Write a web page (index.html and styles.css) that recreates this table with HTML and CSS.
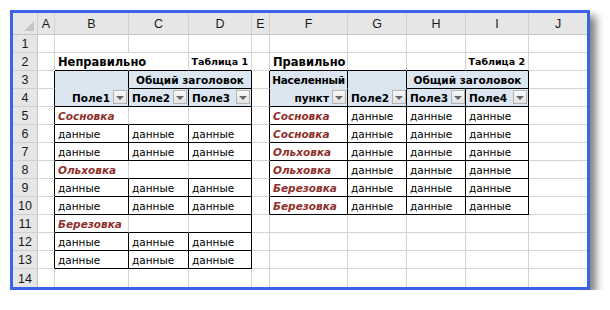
FILE: index.html
```html
<!DOCTYPE html>
<html lang="ru">
<head>
<meta charset="utf-8">
<title>Таблицы</title>
<link rel="stylesheet" href="styles.css">
</head>
<body>
<div class="sheet">
  <!-- column headers -->
  <div class="ch corner"><span class="tri"></span></div>
  <div class="ch">A</div><div class="ch">B</div><div class="ch">C</div><div class="ch">D</div><div class="ch">E</div>
  <div class="ch">F</div><div class="ch">G</div><div class="ch">H</div><div class="ch">I</div><div class="ch last">J</div>

  <!-- row 1 -->
  <div class="rh">1</div>
  <div class="c"></div><div class="c"></div><div class="c"></div><div class="c"></div><div class="c"></div>
  <div class="c"></div><div class="c"></div><div class="c"></div><div class="c"></div><div class="c last"></div>

  <!-- row 2 -->
  <div class="rh">2</div>
  <div class="c"></div>
  <div class="c title nR bB">Неправильно</div>
  <div class="c bB"></div>
  <div class="c cap r bB">Таблица 1</div>
  <div class="c"></div>
  <div class="c title bB">Правильно</div>
  <div class="c bB"></div>
  <div class="c bB"></div>
  <div class="c cap r bB">Таблица 2</div>
  <div class="c last"></div>

  <!-- row 3 -->
  <div class="rh">3</div>
  <div class="c bR"></div>
  <div class="c hd bR nb"></div>
  <div class="c hd b ctr bR bB span2">Общий заголовок</div>
  <div class="c bR"></div>
  <div class="c hd b ctr bR nb tight">Населенный</div>
  <div class="c hd bR nb"></div>
  <div class="c hd b ctr bR bB span2">Общий заголовок</div>
  <div class="c last"></div>

  <!-- row 4 -->
  <div class="rh">4</div>
  <div class="c bR"></div>
  <div class="c hd b r bR bB"><span>Поле1</span><span class="btn"></span></div>
  <div class="c hd b bR bB"><span class="grow">Поле2</span><span class="btn"></span></div>
  <div class="c hd b bR bB"><span class="grow">Поле3</span><span class="btn"></span></div>
  <div class="c bR"></div>
  <div class="c hd b r bR bB"><span>пункт</span><span class="btn"></span></div>
  <div class="c hd b bR bB"><span class="grow">Поле2</span><span class="btn"></span></div>
  <div class="c hd b bR bB"><span class="grow">Поле3</span><span class="btn"></span></div>
  <div class="c hd b bR bB"><span class="grow">Поле4</span><span class="btn"></span></div>
  <div class="c last"></div>

  <!-- row 5 -->
  <div class="rh">5</div>
  <div class="c bR"></div>
  <div class="c grp bB">Сосновка</div>
  <div class="c bB"></div>
  <div class="c bR bB"></div>
  <div class="c bR"></div>
  <div class="c grp bR bB">Сосновка</div>
  <div class="c bR bB">данные</div>
  <div class="c bR bB">данные</div>
  <div class="c bR bB">данные</div>
  <div class="c last"></div>

  <!-- row 6 -->
  <div class="rh">6</div>
  <div class="c bR"></div>
  <div class="c bR bB">данные</div>
  <div class="c bR bB">данные</div>
  <div class="c bR bB">данные</div>
  <div class="c bR"></div>
  <div class="c grp bR bB">Сосновка</div>
  <div class="c bR bB">данные</div>
  <div class="c bR bB">данные</div>
  <div class="c bR bB">данные</div>
  <div class="c last"></div>

  <!-- row 7 -->
  <div class="rh">7</div>
  <div class="c bR"></div>
  <div class="c bR bB">данные</div>
  <div class="c bR bB">данные</div>
  <div class="c bR bB">данные</div>
  <div class="c bR"></div>
  <div class="c grp bR bB">Ольховка</div>
  <div class="c bR bB">данные</div>
  <div class="c bR bB">данные</div>
  <div class="c bR bB">данные</div>
  <div class="c last"></div>

  <!-- row 8 -->
  <div class="rh">8</div>
  <div class="c bR"></div>
  <div class="c grp bB">Ольховка</div>
  <div class="c bB"></div>
  <div class="c bR bB"></div>
  <div class="c bR"></div>
  <div class="c grp bR bB">Ольховка</div>
  <div class="c bR bB">данные</div>
  <div class="c bR bB">данные</div>
  <div class="c bR bB">данные</div>
  <div class="c last"></div>

  <!-- row 9 -->
  <div class="rh">9</div>
  <div class="c bR"></div>
  <div class="c bR bB">данные</div>
  <div class="c bR bB">данные</div>
  <div class="c bR bB">данные</div>
  <div class="c bR"></div>
  <div class="c grp bR bB">Березовка</div>
  <div class="c bR bB">данные</div>
  <div class="c bR bB">данные</div>
  <div class="c bR bB">данные</div>
  <div class="c last"></div>

  <!-- row 10 -->
  <div class="rh">10</div>
  <div class="c bR"></div>
  <div class="c bR bB">данные</div>
  <div class="c bR bB">данные</div>
  <div class="c bR bB">данные</div>
  <div class="c bR"></div>
  <div class="c grp bR bB">Березовка</div>
  <div class="c bR bB">данные</div>
  <div class="c bR bB">данные</div>
  <div class="c bR bB">данные</div>
  <div class="c last"></div>

  <!-- row 11 -->
  <div class="rh">11</div>
  <div class="c bR"></div>
  <div class="c grp bB">Березовка</div>
  <div class="c bB"></div>
  <div class="c bR bB"></div>
  <div class="c"></div><div class="c"></div><div class="c"></div><div class="c"></div><div class="c"></div>
  <div class="c last"></div>

  <!-- row 12 -->
  <div class="rh">12</div>
  <div class="c bR"></div>
  <div class="c bR bB">данные</div>
  <div class="c bR bB">данные</div>
  <div class="c bR bB">данные</div>
  <div class="c"></div><div class="c"></div><div class="c"></div><div class="c"></div><div class="c"></div>
  <div class="c last"></div>

  <!-- row 13 -->
  <div class="rh">13</div>
  <div class="c bR"></div>
  <div class="c bR bB">данные</div>
  <div class="c bR bB">данные</div>
  <div class="c bR bB">данные</div>
  <div class="c"></div><div class="c"></div><div class="c"></div><div class="c"></div><div class="c"></div>
  <div class="c last"></div>

  <!-- row 14 -->
  <div class="rh bottom">14</div>
  <div class="c bottom"></div><div class="c bottom"></div><div class="c bottom"></div><div class="c bottom"></div><div class="c bottom"></div>
  <div class="c bottom"></div><div class="c bottom"></div><div class="c bottom"></div><div class="c bottom"></div><div class="c bottom last"></div>
</div>
</body>
</html>
```

FILE: styles.css
```css
html, body {
  background: #ffffff;
}
body {
  margin: 10px 0 0 10px;
}

.sheet {
  display: grid;
  grid-template-columns: 25px 17px 74px 60px 63px 18px 78px 59px 59px 63px 58px;
  grid-template-rows: 22px repeat(14, 18px);
  width: max-content;
  border: 3px solid #3b63e8;
  box-shadow: 6px 6px 8px rgba(0, 0, 0, 0.5);
  background: #ffffff;
}

.sheet > div {
  box-sizing: border-box;
  min-width: 0;
}

/* column headers */
.ch {
  background: #e6e6e6;
  border-right: 1px solid #d0d0d0;
  border-bottom: 1px solid #c4c4c4;
  font: 12.5px "Liberation Sans", Arial, sans-serif;
  color: #1a1a1a;
  display: flex;
  align-items: center;
  justify-content: center;
  padding-top: 1px;
}
.corner {
  justify-content: flex-end;
  align-items: flex-end;
  padding: 0 3px 3px 0;
}
.tri {
  width: 0;
  height: 0;
  border-left: 10px solid transparent;
  border-bottom: 10px solid #c4c4c4;
}

/* row headers */
.rh {
  background: #e6e6e6;
  border-right: 1px solid #c4c4c4;
  border-bottom: 1px solid #d0d0d0;
  font: 12.5px "Liberation Sans", Arial, sans-serif;
  color: #1a1a1a;
  display: flex;
  align-items: center;
  justify-content: center;
  padding-top: 1px;
}

/* cells */
.c {
  border-right: 1px solid #d4d4d4;
  border-bottom: 1px solid #d4d4d4;
  font: 10.5px "DejaVu Sans", Verdana, sans-serif;
  color: #000;
  display: flex;
  align-items: flex-end;
  padding: 0 3px 1px 3px;
  line-height: 14px;
  white-space: nowrap;
}
.last { border-right: none; }
.bottom { border-bottom: none; }

.bR { border-right-color: #000; }
.bB { border-bottom-color: #000; }
.nR { border-right-color: transparent; }
.hd { background: #dce6f1; }
.nb { border-bottom-color: #dce6f1; }
.b { font-weight: bold; }
.r { justify-content: flex-end; }
.ctr { justify-content: center; }
.span2 { grid-column: span 2; }
.tight { letter-spacing: -0.3px; padding: 0 2px 1px 2px; }

.title {
  font-weight: bold;
  font-size: 11.5px;
}
.cap {
  font-weight: bold;
  font-size: 9.5px;
}
.grp {
  font-weight: bold;
  font-style: italic;
  color: #8f2f2b;
}

.grow { flex: 1; }

.btn {
  flex: none;
  width: 14px;
  height: 14px;
  margin: 0 -2px 1px 3px;
  box-sizing: border-box;
  border: 1px solid #b4b4b4;
  background: linear-gradient(#f8f8f8, #e2e2e2);
  display: flex;
  align-items: center;
  justify-content: center;
}
.btn::after {
  content: "";
  width: 0;
  height: 0;
  border-left: 4px solid transparent;
  border-right: 4px solid transparent;
  border-top: 4px solid #666;
  margin-top: 1px;
}
```
